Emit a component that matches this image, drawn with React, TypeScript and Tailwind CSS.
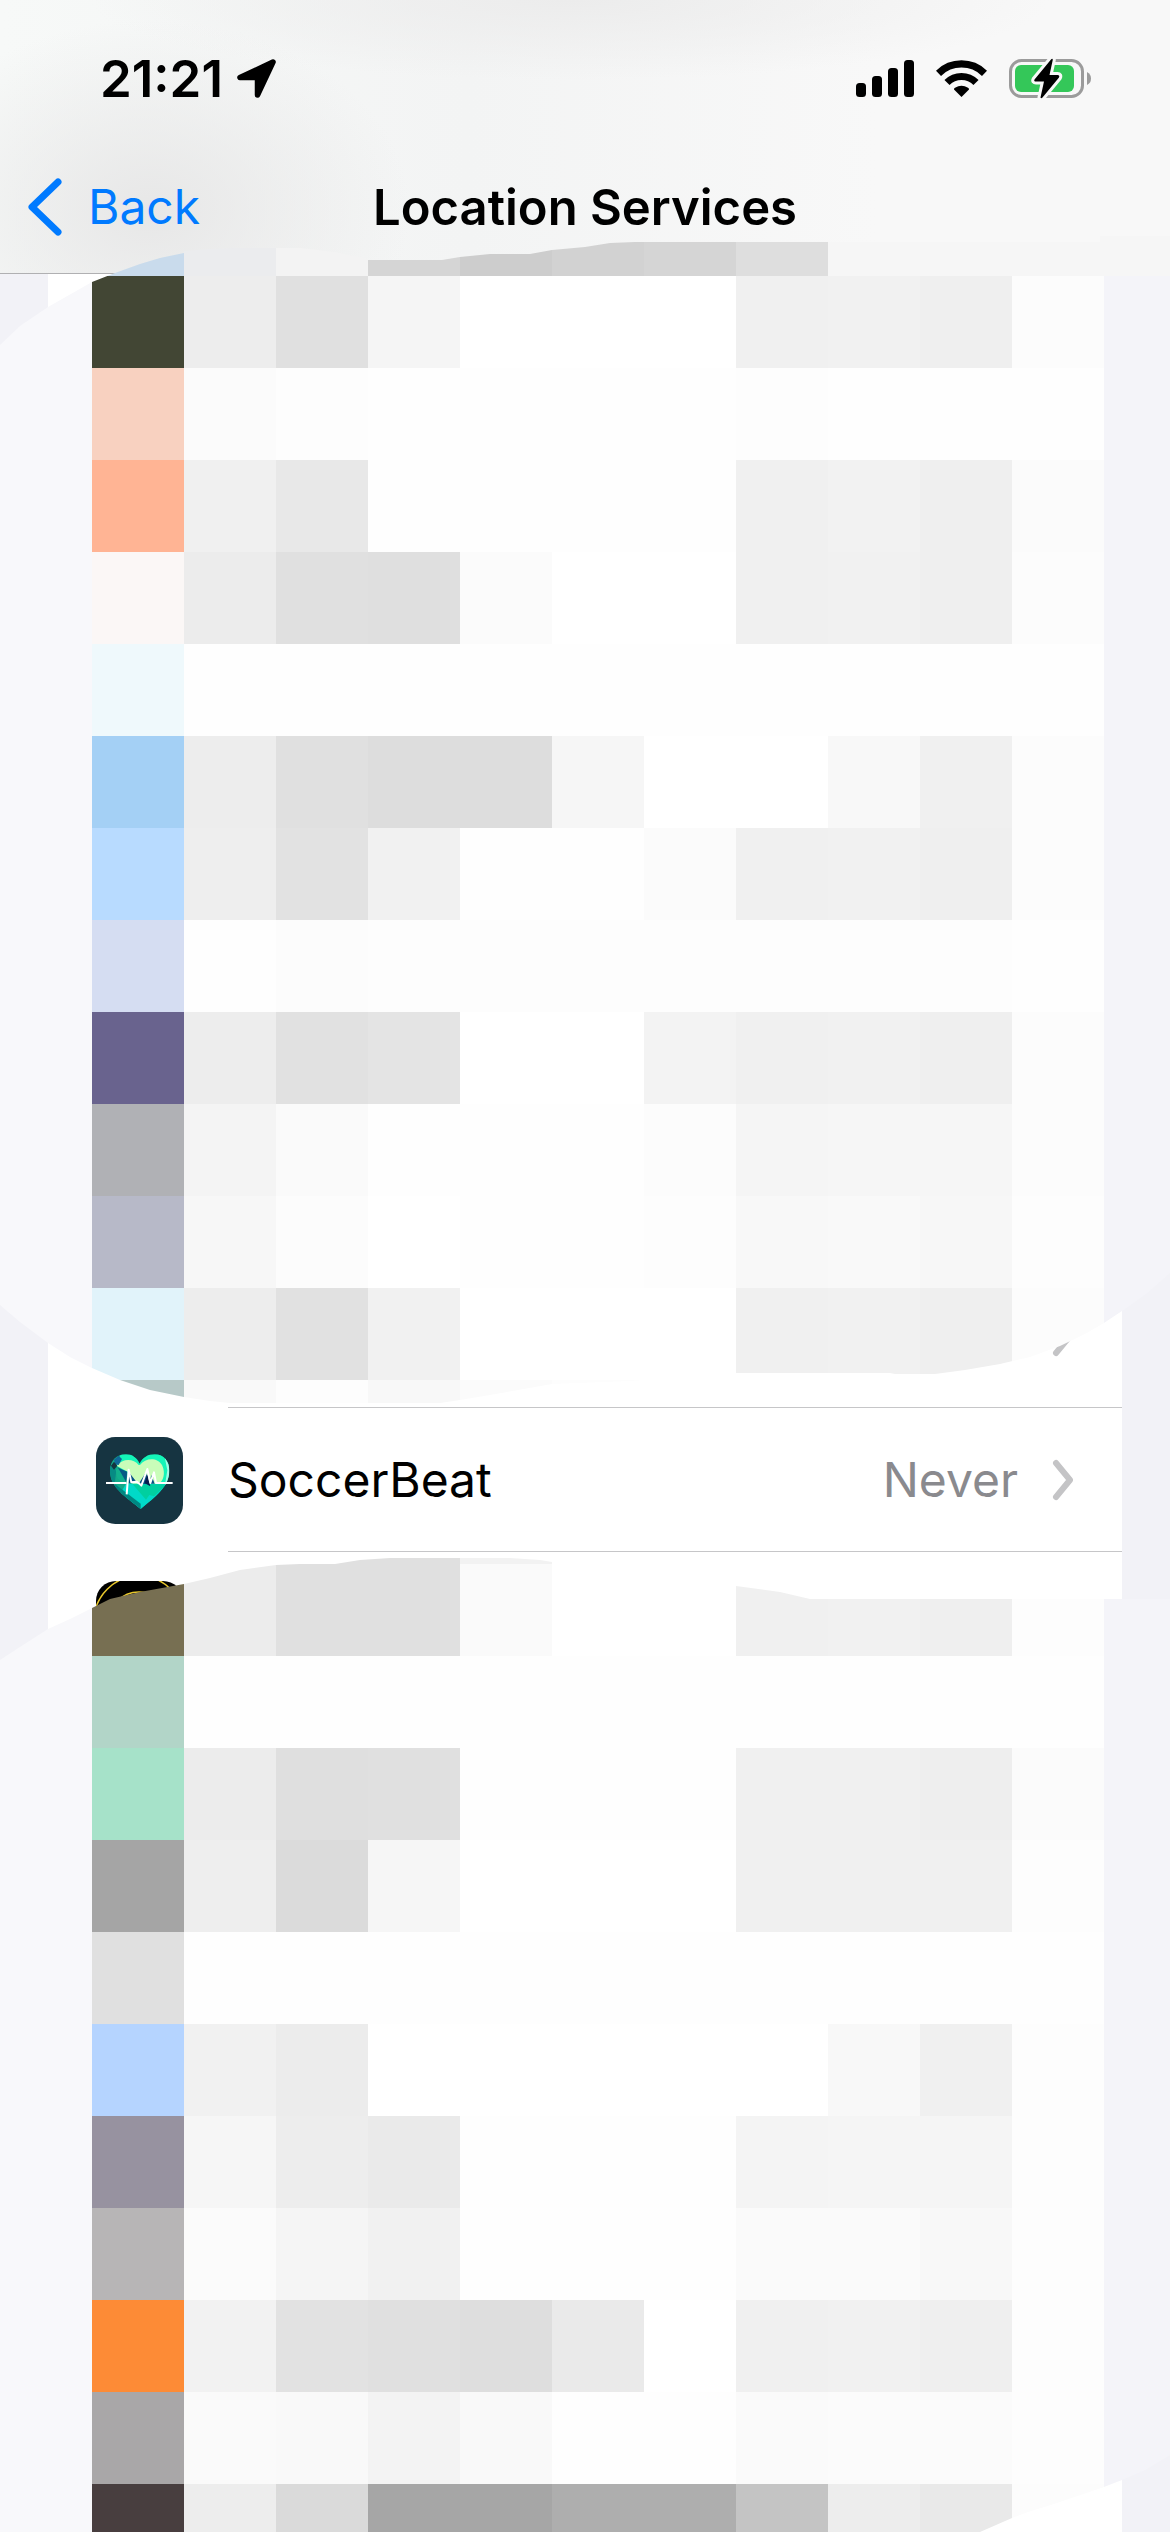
const coverTop: string[] = [
  "#f4f4f4 #c9dbec #ebecee #f3f3f3 #d5d5d5 #cdcdcd #d2d2d2 #d5d5d5 #dedede #f6f6f6 #f6f6f6 #f6f6f6 #f6f6f6",
  "#f8f8fb #424634 #ededed #e0e0e0 #f5f5f5 #fff #fff #fff #f0f0f0 #f1f1f1 #efefef #fcfcfc #f4f4f9",
  "#f8f8fb #f8d1c0 #fbfbfb #fdfdfd #fefefe #fefefe #fefefe #fefefe #fdfdfd #fefefe #fefefe #fefefe #f4f4f9",
  "#f8f8fb #ffb494 #f0f0f0 #e8e8e8 #fefefe #fefefe #fefefe #fefefe #f0f0f0 #f2f2f2 #efefef #fbfbfb #f4f4f9",
  "#f8f8fb #fbf7f6 #ececec #e0e0e0 #dfdfdf #fbfbfb #fff #fff #f0f0f0 #f1f1f1 #efefef #fcfcfc #f4f4f9",
  "#f8f8fb #eff9fc #fefefe #fefefe #fefefe #fefefe #fefefe #fefefe #fefefe #fefefe #fefefe #fefefe #f4f4f9",
  "#f8f8fb #a4d0f5 #ededed #e0e0e0 #dddddd #dddddd #f6f6f6 #fff #fff #f8f8f8 #f0f0f0 #fcfcfc #f4f4f9",
  "#f8f8fb #b8dbff #eeeeee #e2e2e2 #f1f1f1 #fefefe #fefefe #fbfbfb #f0f0f0 #f1f1f1 #efefef #fcfcfc #f4f4f9",
  "#f8f8fb #d5ddf2 #fefefe #fcfcfc #fdfdfd #fdfdfd #fdfdfd #fdfdfd #fdfdfd #fdfdfd #fdfdfd #fefefe #f4f4f9",
  "#f8f8fb #69638e #ededed #e1e1e1 #e4e4e4 #fff #fff #f3f3f3 #f0f0f0 #f1f1f1 #efefef #fcfcfc #f4f4f9",
  "#f8f8fb #b0b1b5 #f4f4f4 #fafafa #fefefe #fefefe #fefefe #fcfcfc #f5f5f5 #f6f6f6 #f6f6f6 #fcfcfc #f4f4f9",
  "#f8f8fb #b7b9c8 #f7f7f7 #fcfcfc #fff #fefefe #fefefe #fdfdfd #f8f8f8 #f9f9f9 #f7f7f7 #fdfdfd #f4f4f9",
  "#f8f8fb #e1f3fa #ededed #e1e1e1 #f1f1f1 #fff #fff #fff #f0f0f0 #f1f1f1 #efefef #fcfcfc #f4f4f9",
  "#f8f8fb #b7c9c8 #f9f9f9 #fdfdfd #f8f8f8 #fbfbfb #fdfdfd #fff #fff #fff #fff #fff #f4f4f9",
];

const coverBottom: string[] = [
  "#fff #fff #fff #e0e0e0 #e0e0e0 #f2f2f2 #fff #fff #fff #fff #fff #fff #f2f2f7",
  "#f8f8fb #776f52 #ececec #e0e0e0 #e0e0e0 #fafafa #fff #fff #f0f0f0 #f1f1f1 #efefef #fdfdfd #f4f4f9",
  "#f8f8fb #b2d5c8 #fefefe #fefefe #fefefe #fefefe #fefefe #fefefe #fefefe #fefefe #fefefe #fefefe #f4f4f9",
  "#f8f8fb #a6e2c9 #ececec #dfdfdf #e0e0e0 #fefefe #fefefe #fefefe #f0f0f0 #f0f0f0 #eeeeee #fbfbfb #f4f4f9",
  "#f8f8fb #a5a5a5 #eeeeee #dbdbdb #f6f6f6 #fff #fff #fff #f0f0f0 #f0f0f0 #f0f0f0 #fdfdfd #f4f4f9",
  "#f8f8fb #e0e0e0 #fefefe #fefefe #fefefe #fefefe #fefefe #fefefe #fefefe #fefefe #fefefe #fefefe #f4f4f9",
  "#f8f8fb #b5d4ff #f1f1f1 #ececec #fff #fff #fff #fff #fff #f8f8f8 #f0f0f0 #fdfdfd #f4f4f9",
  "#f8f8fb #9792a0 #f6f6f6 #ededed #eaeaea #fefefe #fefefe #fefefe #f4f4f4 #f5f5f5 #f5f5f5 #fdfdfd #f4f4f9",
  "#f8f8fb #b7b5b6 #fbfbfb #f5f5f5 #f1f1f1 #fefefe #fefefe #fefefe #fafafa #fafafa #f8f8f8 #fdfdfd #f4f4f9",
  "#f8f8fb #fd8b36 #f2f2f2 #e2e2e2 #e0e0e0 #dedede #eaeaea #fff #f0f0f0 #f1f1f1 #efefef #fdfdfd #f4f4f9",
  "#f8f8fb #a9a7a8 #fafafa #f9f9f9 #f3f3f3 #f9f9f9 #fefefe #fefefe #fafafa #fbfbfb #fbfbfb #fdfdfd #f4f4f9",
  "#f8f8fb #483e3f #ededed #dadada #a6a6a6 #a6a6a6 #aeaeae #aeaeae #c4c4c4 #ededed #e9e9e9 #fcfcfc #f4f4f9",
];

type Point = [number, number];

// Outlines of the two brushed areas, on a 1170 unit wide canvas.
const topOutline: Point[] = [
  [0, 161], [20, 142], [48, 123], [92, 98], [115, 89], [140, 80], [160, 74], [184, 69], [184, 67], [210, 65], [235, 64],
  [300, 64], [335, 68], [368, 75], [368, 76], [442, 76], [460, 73], [490, 70], [530, 70], [552, 66], [585, 63], [610, 59], [635, 58],
  [1100, 58], [1100, 52], [1170, 52], [1170, 1089], [1146, 1110], [1122, 1127], [1104, 1139], [1085, 1150], [1060, 1162], [1030, 1173],
  [1000, 1180], [965, 1186], [935, 1190], [895, 1190], [890, 1189], [736, 1189], [630, 1197], [552, 1200], [490, 1211], [460, 1216],
  [440, 1219], [230, 1219], [210, 1217], [184, 1213], [150, 1206], [120, 1196], [92, 1184], [70, 1173], [48, 1159], [20, 1138], [0, 1121],
];

const bottomOutline: Point[] = [
  [0, 188], [20, 175], [48, 157], [70, 147], [92, 136], [110, 127], [140, 120], [184, 112], [210, 106], [240, 98], [276, 93],
  [300, 92], [335, 92], [360, 88], [390, 86], [510, 86], [540, 88], [552, 90], [736, 114], [780, 120], [810, 127], [1170, 127],
  [1170, 983], [1145, 998], [1122, 1008], [1104, 1015], [1054, 1032], [1028, 1040], [1012, 1046], [980, 1060], [0, 1060],
];

const clip = (points: Point[], height: number) =>
  `polygon(${points.map(([x, y]) => `${(x / 1170) * 100}% ${(y / height) * 100}%`).join(",")})`;

function Mosaic({ rows, outline, height, className }: { rows: string[]; outline: Point[]; height: number; className: string }) {
  return (
    <div
      aria-hidden="true"
      className={`absolute inset-x-0 grid grid-cols-[repeat(12,92fr)_66fr] ${className}`}
      style={{ clipPath: clip(outline, height) }}
    >
      {rows.flatMap((row, r) =>
        row.split(" ").map((color, c) => <span key={`${r}-${c}`} style={{ backgroundColor: color }} />)
      )}
    </div>
  );
}

function StatusBar() {
  return (
    <div className="flex h-[156px] items-center justify-between pl-[100px] pr-[78px]">
      <div className="flex items-center gap-[14px]">
        <span className="text-[51px] font-semibold leading-none">21:21</span>
        <svg viewBox="0 0 39 39" className="size-[39px]" aria-label="Location in use">
          <path d="M36 3 L3 18.5 L20.5 18.5 L20.5 36 Z" stroke="#000" strokeWidth="5.5" strokeLinejoin="round" />
        </svg>
      </div>
      <div className="flex items-center gap-[22px]">
        <svg viewBox="0 0 58 37" className="h-[37px] w-[58px]" aria-label="Signal">
          <rect x="0" y="23" width="10" height="14" rx="3.5" />
          <rect x="16" y="16" width="10" height="21" rx="3.5" />
          <rect x="32" y="8" width="10" height="29" rx="3.5" />
          <rect x="48" y="0" width="10" height="37" rx="3.5" />
        </svg>
        <svg viewBox="0 0 51 37" className="h-[37px] w-[51px]" aria-label="Wi-Fi">
          <g fill="none" stroke="#000" strokeWidth="7.2">
            <path d="M2.5 13.3 A33 33 0 0 1 48.5 13.3" />
            <path d="M11 22.5 A20.5 20.5 0 0 1 40 22.5" />
          </g>
          <path d="M25.5 37 L18 29.6 Q17.8 28.6 19 27.8 Q25.5 23.6 32 27.8 Q33.2 28.6 33 29.6 Z" />
        </svg>
        <svg viewBox="0 0 83 41" className="h-[41px] w-[83px]" aria-label="Battery charging">
          <rect x="1.5" y="2.5" width="72" height="36" rx="11" fill="none" stroke="#9b9b9b" strokeWidth="3" />
          <path d="M78 14 Q82 16 82 20.500 Q82 25 78 27 Z" fill="#9b9b9b" />
          <rect x="6" y="7" width="59" height="27" rx="6" fill="#34c759" />
          <path
            d="M42 1.500 L25.500 21.500 Q24.500 23.500 27 23.500 L35 23.500 L31.500 39.500 Q32 41 33.500 39.500 L50 19.500 Q51 17 48.500 17 L40.500 17 L43.800 1.800 Q43.500 0 42 1.500 Z"
            stroke="#f8f8f8"
            strokeWidth="6"
            strokeLinejoin="round"
            paintOrder="stroke"
          />
        </svg>
      </div>
    </div>
  );
}

function Chevron() {
  return (
    <svg viewBox="0 0 22 42" className="h-[42px] w-[22px] shrink-0" aria-hidden="true">
      <path d="M4 4 L18 21 L4 38" fill="none" stroke="#c4c4c6" strokeWidth="6" strokeLinecap="round" strokeLinejoin="round" />
    </svg>
  );
}

function HeartIcon() {
  return (
    <svg viewBox="0 0 261 261" className="size-[87px] shrink-0" aria-hidden="true">
      <defs>
        <clipPath id="heart">
          <path d="M134 216 C90 180 42 152 42 102 C42 70 62 52 90 52 C108 52 122 62 131 80 C140 62 156 52 176 52 C204 52 220 74 220 100 C220 150 178 180 134 216Z" />
        </clipPath>
      </defs>
      <rect width="261" height="261" rx="58" fill="#163441" />
      <g clipPath="url(#heart)">
        <rect x="40" y="50" width="182" height="170" fill="#12a888" />
        <path d="M75 50 H225 V140 L150 150 L60 85Z" fill="#14f5b8" />
        <path d="M205 55 L222 75 V120 L206 150 L214 100Z" fill="#a4fbe6" />
        <path d="M62 86 C80 64 112 64 128 84 L132 84 C148 62 184 60 198 84 C210 108 202 134 186 142 H110 L95 104Z" fill="#c9fdb9" />
        <path d="M134 140 L90 140 L74 168 L134 218 L190 170 L210 140Z" fill="#00d9c8" />
        <path d="M110 142 H212 L174 178 L160 174 L150 188Z" fill="#00cfa0" />
        <path d="M58 142 L134 200 V220 L40 160Z" fill="#008782" />
        <path d="M40 90 L54 80 L62 92 L56 140 L44 130Z" fill="#078b84" />
        <path d="M58 92 L92 104 L86 142 L64 124Z" fill="#12b08d" />
        <path d="M54 68 L68 56 L78 66 L68 84 L57 82Z" fill="#0f6798" />
        <path d="M45 86 L54 74 L64 86 L54 98Z" fill="#143440" />
        <path d="M66 92 L94 104 L90 134Z" fill="#075a86" />
        <path d="M99 106 L124 138 H98Z M128 140 L150 106 L160 142Z M166 114 L176 140 H160Z" fill="#064f86" />
        <path d="M146 138 L154 112 L163 148Z" fill="#061a4e" />
      </g>
      <path
        d="M30 138 H91 M92 172 L98 98 L106 136 L122 134 L130 140 L136 146 L154 96 L163 138 L174 106 L180 138 H230"
        fill="none"
        stroke="#fff"
        strokeWidth="6"
        strokeLinejoin="round"
      />
    </svg>
  );
}

function RingsIcon() {
  return (
    <svg viewBox="0 0 87 87" className="size-[87px] shrink-0" aria-hidden="true">
      <rect width="87" height="87" rx="20" />
      <g fill="none" stroke="#e8c72c" strokeWidth="1.500">
        <circle cx="43" cy="40" r="45" />
        <circle cx="43" cy="42" r="31" />
      </g>
    </svg>
  );
}

export default function App() {
  return (
    <div className="relative flex min-h-screen flex-col overflow-hidden bg-[#f2f2f7] font-['Inter','Liberation_Sans',sans-serif] text-black">
      <header className="h-[274px] border-b border-[#b0b0b2] bg-[radial-gradient(ellipse_260px_190px_at_150px_210px,#e7e7e7,transparent),radial-gradient(ellipse_480px_80px_at_570px_0px,#ececec,transparent),linear-gradient(to_right,#f7f9f8,#f3f4f4_40%,#f8f8f8_75%)]">
        <StatusBar />
        <nav className="grid h-[102px] grid-cols-[1fr_auto_1fr] items-center">
          <button type="button" className="flex items-center gap-[26px] pl-[27px] text-[48px] leading-none text-[#007aff]">
            <svg viewBox="0 0 35 58" className="h-[58px] w-[35px]" aria-hidden="true">
              <path d="M31 4 L5 29 L31 54" fill="none" stroke="currentColor" strokeWidth="7" strokeLinecap="round" strokeLinejoin="round" />
            </svg>
            Back
          </button>
          <h1 className="text-[49px] font-semibold leading-none">Location Services</h1>
        </nav>
      </header>
      <main className="relative flex flex-1 flex-col">
        <ul className="mx-12 flex-1 bg-white pt-[990px]">
          <li className="flex h-[144px] pl-[180px]">
            <div className="flex flex-1 items-center justify-end border-b border-[#c6c6c8] pr-[48px]">
              <Chevron />
            </div>
          </li>
          <li>
            <a href="#soccerbeat" className="flex h-[144px] items-center gap-[45px] pl-12">
              <HeartIcon />
              <span className="flex flex-1 items-center self-stretch border-b border-[#c6c6c8] pr-[48px] text-[48px] leading-none">
                <span className="flex-1">SoccerBeat</span>
                <span className="pr-[34px] text-[#8a8a8e]">Never</span>
                <Chevron />
              </span>
            </a>
          </li>
          <li className="flex h-[144px] items-center pl-12">
            <RingsIcon />
          </li>
        </ul>
        <Mosaic rows={coverTop} outline={topOutline} height={1288} className="-top-[90px] auto-rows-[92px]" />
        <Mosaic rows={coverBottom} outline={bottomOutline} height={1060} className="top-[1198px] grid-rows-[repeat(11,92px)_48px]" />
      </main>
    </div>
  );
}
